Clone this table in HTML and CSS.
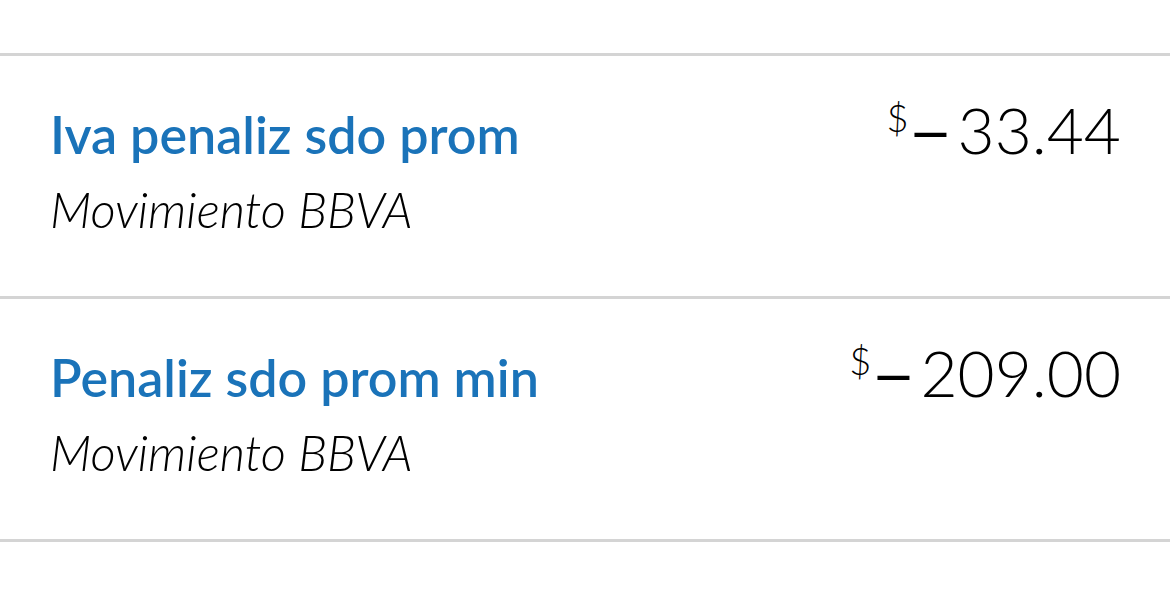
FILE: index.html
```html
<!DOCTYPE html>
<html lang="es">
<head>
    <meta charset="UTF-8">
    <meta name="viewport" content="width=device-width, initial-scale=1.0">
    <title>Movimientos</title>
    <link rel="stylesheet" href="styles.css">
</head>
<body>
    <ul class="movements">
        <li class="movement">
            <div class="info">
                <span class="concept">Iva penaliz sdo prom</span>
                <span class="source">Movimiento BBVA</span>
            </div>
            <div class="amount"><span class="currency">$</span><span class="sign">–</span>33.44</div>
        </li>
        <li class="movement">
            <div class="info">
                <span class="concept">Penaliz sdo prom min</span>
                <span class="source">Movimiento BBVA</span>
            </div>
            <div class="amount"><span class="currency">$</span><span class="sign">–</span>209.00</div>
        </li>
    </ul>
</body>
</html>
```

FILE: styles.css
```css
body {
    margin: 0;
    background-color: #fff;
    font-family: Lato, "Open Sans", sans-serif;
    color: #000;
}
.movements {
    list-style: none;
    margin: 53px 0 0;
    padding: 0;
    border-top: 3px solid #d4d4d4;
}
.movement {
    display: flex;
    justify-content: space-between;
    align-items: flex-start;
    height: 240px;
    box-sizing: content-box;
    padding: 0 49px 0 50px;
    border-bottom: 3px solid #d4d4d4;
}
.info {
    display: flex;
    flex-direction: column;
    padding-top: 50px;
}
.concept {
    font-size: 52px;
    font-weight: 600;
    color: #1a73b9;
    line-height: 56px;
}
.source {
    font-size: 49px;
    font-style: italic;
    font-weight: 300;
    line-height: 50px;
    margin-top: 22px;
}
.amount {
    padding-top: 34px;
    font-size: 64px;
    font-weight: 300;
    line-height: 80px;
}
.currency {
    font-size: 38px;
    vertical-align: top;
    line-height: 54px;
}
.sign {
    font-weight: 400;
    display: inline-block;
    transform: scaleX(1.25);
    margin: 0 8px 0 4px;
}
```
